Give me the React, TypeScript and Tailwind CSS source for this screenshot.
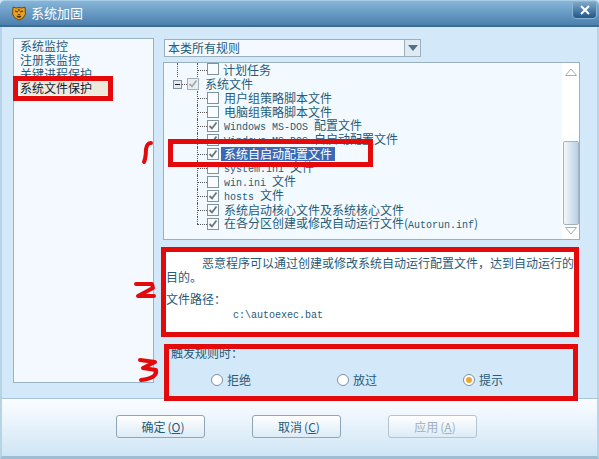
const cjk = "font-['SimSun','Noto_Sans_CJK_SC','Liberation_Mono',monospace]"

const Latin: React.FC<{ children: React.ReactNode }> = ({ children }) => (
  <span className="font-['Liberation_Mono',monospace] text-[10px]">{children}</span>
)

const TigerIcon = () => (
  <svg width="16" height="16" viewBox="0 0 16 16" className="mr-[4px] shrink-0">
    <path d="M2 2 L5 3 Q8 2 11 3 L14 2 L14.500 9 Q13 14 8 15 Q3 14 1.500 9 Z" fill="#e8a020" stroke="#6b4a14" />
    <path d="M4 6 L7 7 M12 6 L9 7 M8 4 V6 M6 11 Q8 13 10 11" stroke="#4a2c08" strokeWidth="1.200" fill="none" />
    <path d="M6.500 9 H9.500 L8 10.500 Z" fill="#5b3208" />
  </svg>
)

const Check = ({ checked, muted }: { checked?: boolean; muted?: boolean }) => (
  <span className={`flex h-[12px] w-[12px] shrink-0 items-center justify-center border ${muted ? "border-[#a5b0b6] bg-[#e9eef0]" : "border-[#7f929e] bg-[#f8fcff]"}`}>
    {checked && (
      <svg width="10" height="10" viewBox="0 0 10 10">
        <path d="M1.500 5 L4 7.500 L8.500 1.500" fill="none" stroke={muted ? "#a3adb2" : "#66767f"} strokeWidth="1.800" />
      </svg>
    )}
  </span>
)

// dotted tree connector, one row tall
const Branch = ({ last }: { last?: boolean }) => (
  <span className="relative h-[14px] w-[10px] shrink-0">
    <span className={`absolute left-0 top-0 border-l border-dotted border-[#555] ${last ? "h-[7px]" : "h-[14px]"}`} />
    <span className="absolute left-0 top-[7px] w-[10px] border-t border-dotted border-[#555]" />
  </span>
)

const TreeRow = ({ checked, last, selected, children }: { checked?: boolean; last?: boolean; selected?: boolean; children: React.ReactNode }) => (
  <div className="flex h-[14px] items-center pl-[33px]">
    <Branch last={last} />
    <Check checked={checked} />
    <span className={`ml-[2px] whitespace-nowrap px-[3px] leading-[14px] ${selected ? "bg-[#3b69b5] text-white" : ""}`}>{children}</span>
  </div>
)

const Radio = ({ on, label, className }: { on?: boolean; label: string; className: string }) => (
  <label className={`flex items-center gap-[4px] ${className}`}>
    <span className="flex h-[12px] w-[12px] items-center justify-center rounded-full border border-[#7d8f9d] bg-white">
      {on && <span className="h-[6px] w-[6px] rounded-full bg-[#f0a62c]" />}
    </span>
    {label}
  </label>
)

const FooterButton = ({ label, hot, disabled }: { label: string; hot: string; disabled?: boolean }) => (
  <button
    type="button"
    className={`flex h-[23px] w-[89px] items-center justify-center rounded-[3px] border bg-gradient-to-b from-white to-[#dcebf6] pl-[5px] ${disabled ? "border-[#b5c5d0] text-[#9db0bc]" : "border-[#8fa5b5] text-[#265a78]"}`}
  >
    {label} <span className="ml-[2px]">(<span className="underline">{hot}</span>)</span>
  </button>
)

const Redbox = ({ className }: { className: string }) => (
  <div className={`absolute border-[5px] border-[#e40a0c] ${className}`} />
)

const App: React.FC = () => {
  return (
    <div className={`relative h-[459px] w-[599px] overflow-hidden bg-[#d3e8f8] text-[12px] leading-[14px] text-[#265a78] ${cjk}`}>
      <div className="flex h-[27px] items-center rounded-t-[5px] border-b-2 border-t border-[#3c6b94] border-t-[#a8cde6] bg-gradient-to-b from-[#86b5d8] to-[#4c80ae] pl-[11px] text-[13px] text-white">
        <TigerIcon />
        系统加固
        <div className="ml-auto mr-[2px] flex h-[18px] w-[25px] items-center justify-center self-start rounded-b-[4px] border border-[#8ab6d6] bg-gradient-to-b from-[#7fa9c8] to-[#1f5688] text-white">
          <svg width="10" height="10" viewBox="0 0 10 10"><path d="M1 1 L9 9 M9 1 L1 9" stroke="white" strokeWidth="2" /></svg>
        </div>
      </div>

      <div className="flex h-[371px] border-x-2 border-x-[#b7d3e6] pl-[11px]">
        <div className="mt-[11px] h-[345px] w-[141px] border border-[#98b2c6] bg-[#f3f9ff] pl-[6px]">
          <div className="h-[14px]">系统监控</div>
          <div className="h-[14px]">注册表监控</div>
          <div className="h-[14px]">关键进程保护</div>
          <div className="h-[14px] w-[89px] bg-[#efe9dc] text-[#123]">系统文件保护</div>
        </div>

        <div className="ml-[9px] flex w-[417px] flex-col">
          <div className="ml-px mt-[12px] flex h-[18px] w-[257px] items-center border border-[#9ab0bf] bg-[#f3f9ff] pl-[3px]">
            本类所有规则
            <span className="ml-auto flex h-[16px] w-[16px] items-center justify-center border-l border-[#9ab0bf] bg-[#dfeaf2]">
              <svg width="10" height="6" viewBox="0 0 10 6"><path d="M0 0 H10 L5 6 Z" fill="#50708c" /></svg>
            </span>
          </div>

          <div className="mt-[5px] flex h-[178px] border border-[#9ab0bf] bg-[#f3faff]">
            <div className="flex-1 overflow-hidden">
              <div className="flex h-[14px] pl-[13px]">
                <span className="h-[14px] border-l border-dotted border-[#555]" />
                <span className="ml-[19px] flex items-center">
                  <Branch />
                </span>
                <Check />
                <span className="ml-[4px]">计划任务</span>
              </div>
              <div className="flex h-[14px] items-center pl-[9px]">
                <span className="flex h-[9px] w-[9px] items-center justify-center border border-[#7f929e] bg-[#e3e9ec]">
                  <span className="h-px w-[5px] bg-[#222]" />
                </span>
                <span className="w-[5px] border-t border-dotted border-[#555]" />
                <Check checked muted />
                <span className="ml-[6px]">系统文件</span>
              </div>
              <TreeRow>用户组策略脚本文件</TreeRow>
              <TreeRow>电脑组策略脚本文件</TreeRow>
              <TreeRow checked><Latin>Windows MS-DOS&nbsp;</Latin>配置文件</TreeRow>
              <TreeRow checked><Latin>Windows MS-DOS&nbsp;</Latin>自启动配置文件</TreeRow>
              <TreeRow checked selected>系统自启动配置文件</TreeRow>
              <TreeRow><Latin>system.ini&nbsp;</Latin>文件</TreeRow>
              <TreeRow><Latin>win.ini&nbsp;</Latin>文件</TreeRow>
              <TreeRow checked><Latin>hosts&nbsp;</Latin>文件</TreeRow>
              <TreeRow checked>系统启动核心文件及系统核心文件</TreeRow>
              <TreeRow checked last>在各分区创建或修改自动运行文件(<Latin>Autorun.inf</Latin>)</TreeRow>
            </div>
            <div className="flex w-[17px] flex-col items-center bg-white pt-[5px]">
              <svg width="12" height="8" viewBox="0 0 12 8"><path d="M0.500 7.500 L6 1 L11.500 7.500 Z" fill="none" stroke="#9fb0bb" /></svg>
              <div className="mt-[65px] h-[84px] w-[16px] rounded-[2px] border border-[#9fb3c2] bg-gradient-to-r from-[#f3f8fc] to-[#b9cfe2]" />
              <svg width="12" height="8" viewBox="0 0 12 8" className="mt-[2px]"><path d="M0.500 0.500 L6 7 L11.500 0.500 Z" fill="none" stroke="#9fb0bb" /></svg>
            </div>
          </div>

          <div className="ml-[3px] mt-[12px] h-[80px] w-[408px] bg-white pt-[4px]">
            <p className="whitespace-nowrap indent-[36px]">恶意程序可以通过创建或修改系统自动运行配置文件，达到自动运行的</p>
            <p>目的。</p>
            <p className="mt-[8px]">文件路径：</p>
            <p className="pl-[67px]"><Latin>c:\autoexec.bat</Latin></p>
          </div>

          <div className="mt-[14px] pl-[8px]">触发规则时：</div>
          <div className="mt-[13px] flex pl-[48px]">
            <Radio label="拒绝" className="w-[126px]" />
            <Radio label="放过" className="w-[126px]" />
            <Radio on label="提示" className="w-[60px]" />
          </div>
        </div>
      </div>

      <div className="flex h-[61px] gap-[47px] border-x-2 border-b-[3px] border-t border-x-[#b7d3e6] border-b-[#9fbdd0] border-t-[#a9c4d8] bg-gradient-to-b from-[#fbfdff] to-[#cfe5f5] pl-[114px] pt-[16px]">
        <FooterButton label="确定" hot="O" />
        <FooterButton label="取消" hot="C" />
        <FooterButton disabled label="应用" hot="A" />
      </div>

      {/* hand drawn annotations over the screenshot */}
      <Redbox className="left-[13px] top-[76px] h-[25px] w-[100px]" />
      <Redbox className="left-[168px] top-[139px] h-[28px] w-[205px]" />
      <Redbox className="left-[161px] top-[247px] h-[90px] w-[418px]" />
      <Redbox className="left-[164px] top-[344px] h-[57px] w-[414px]" />
      <svg className="absolute left-[130px] top-[135px]" width="35" height="260" viewBox="0 0 35 260" fill="none" stroke="#e40a0c" strokeWidth="4" strokeLinecap="round" strokeLinejoin="round">
        <path d="M21 8 Q17 8 16 14 Q16 20 15 24 Q14 27 14 27" />
        <path d="M6 149 H22 L23 153 L8 161 H24" />
        <path d="M10 225 L25 227 L13 233 L26 235 Q28 243 11 245" />
      </svg>
    </div>
  )
}

export default App
